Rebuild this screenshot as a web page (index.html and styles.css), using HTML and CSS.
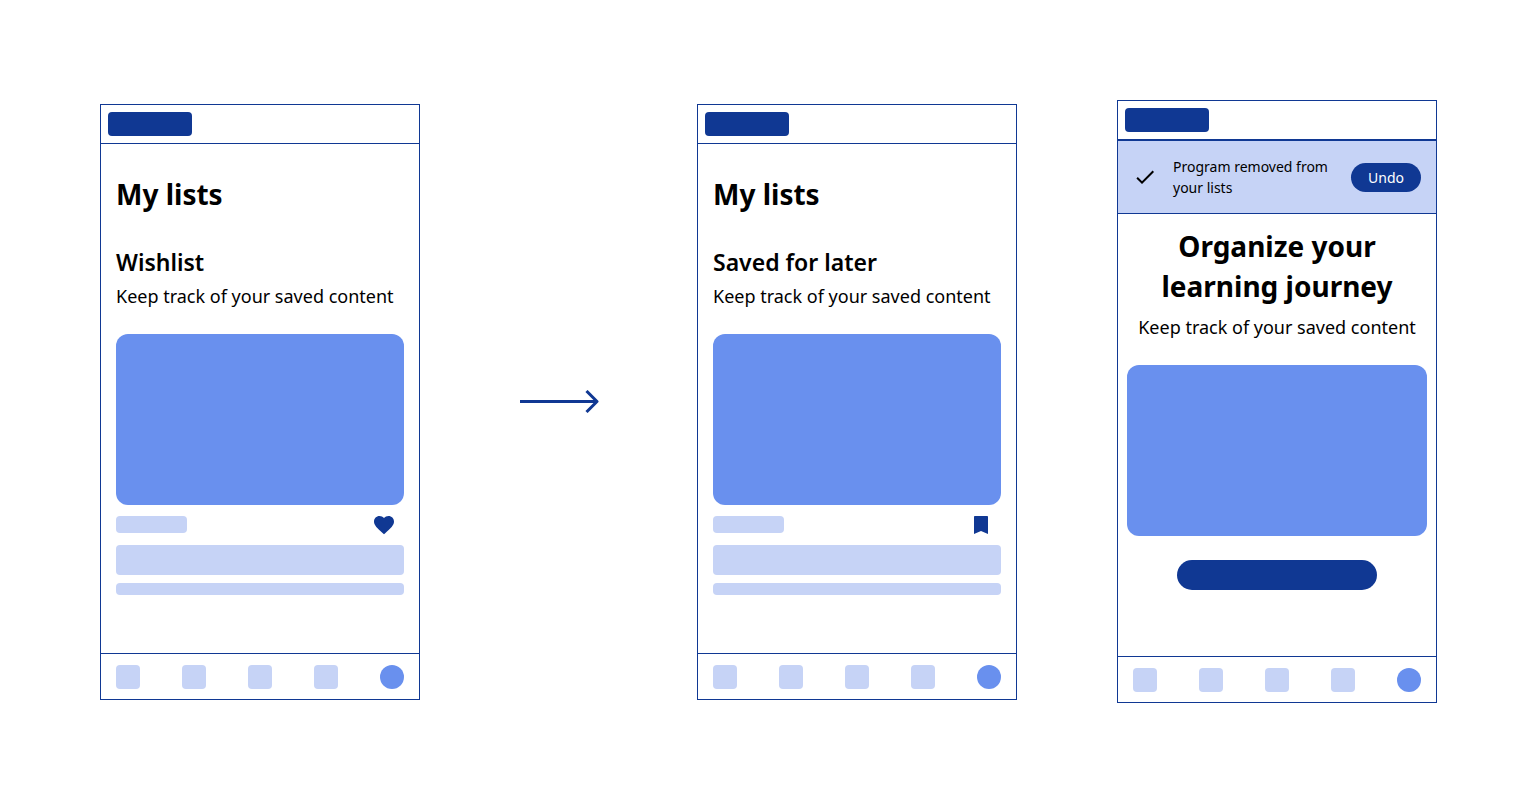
FILE: index.html
```
<!DOCTYPE html>
<html lang="en">
<head>
    <meta charset="UTF-8">
    <meta name="viewport" content="width=device-width, initial-scale=1.0">
    <title>My lists</title>
    <link rel="stylesheet" href="styles.css">
</head>
<body>

    <main class="flow">
        <section class="phone">
            <header class="topbar">
                <div class="logo"></div>
            </header>
            <div class="content">
                <h1>My lists</h1>
                <h2>Wishlist</h2>
                <p>Keep track of your saved content</p>
                <div class="cover"></div>
                <div class="meta">
                    <div class="tag"></div>
                    <svg class="icon" viewBox="0 0 24 24" aria-hidden="true">
                        <path d="M12 21.35l-1.45-1.32C5.4 15.36 2 12.28 2 8.5 2 5.42 4.42 3 7.5 3c1.74 0 3.41.81 4.5 2.09C13.09 3.81 14.76 3 16.5 3 19.58 3 22 5.42 22 8.5c0 3.78-3.4 6.86-8.55 11.54L12 21.35z"/>
                    </svg>
                </div>
                <div class="line line-big"></div>
                <div class="line"></div>
            </div>
            <nav class="tabs">
                <span class="tab"></span>
                <span class="tab"></span>
                <span class="tab"></span>
                <span class="tab"></span>
                <span class="tab active"></span>
            </nav>
        </section>

        <svg class="arrow" viewBox="0 0 80 23" aria-hidden="true">
            <path d="M0 11.5H77M66.5 1l10.5 10.5L66.5 22"/>
        </svg>

        <section class="phone">
            <header class="topbar">
                <div class="logo"></div>
            </header>
            <div class="content">
                <h1>My lists</h1>
                <h2>Saved for later</h2>
                <p>Keep track of your saved content</p>
                <div class="cover"></div>
                <div class="meta">
                    <div class="tag"></div>
                    <svg class="icon" viewBox="0 0 24 24" aria-hidden="true">
                        <path d="M18.2 3H5.8c-.5 0-.8.3-.8.8V21l7-3 7 3V3.800c0-.5-.3-.8-.8-.8z"/>
                    </svg>
                </div>
                <div class="line line-big"></div>
                <div class="line"></div>
            </div>
            <nav class="tabs">
                <span class="tab"></span>
                <span class="tab"></span>
                <span class="tab"></span>
                <span class="tab"></span>
                <span class="tab active"></span>
            </nav>
        </section>

        <section class="phone">
            <header class="topbar">
                <div class="logo"></div>
            </header>
            <div class="banner" role="status">
                <svg class="check" viewBox="0 0 24 24" aria-hidden="true">
                    <path d="M9 16.17L4.83 12l-1.42 1.41L9 19 21 7l-1.41-1.41z"/>
                </svg>
                <p>Program removed from your lists</p>
                <button class="undo" type="button">Undo</button>
            </div>
            <div class="content empty">
                <h1>Organize your learning journey</h1>
                <p>Keep track of your saved content</p>
                <div class="cover"></div>
                <button class="cta" type="button" aria-label="Explore"></button>
            </div>
            <nav class="tabs">
                <span class="tab"></span>
                <span class="tab"></span>
                <span class="tab"></span>
                <span class="tab"></span>
                <span class="tab active"></span>
            </nav>
        </section>
    </main>

</body>
</html>
```
FILE: styles.css
```
* {
    box-sizing: border-box;
}
body {
    margin: 0;
    font-family: "Noto Sans", sans-serif;
    background-color: #fff;
    color: #000;
}
h1, h2, p {
    margin: 0;
}
.flow {
    display: flex;
    justify-content: center;
    align-items: center;
    gap: 100px;
    min-height: 100vh;
}
.phone {
    flex: 0 0 320px;
    border: 1px solid #103893;
}
.topbar {
    padding: 7px;
    border-bottom: 1px solid #103893;
}
.logo {
    width: 84px;
    height: 24px;
    border-radius: 4px;
    background-color: #103893;
}
.content {
    padding: 30px 15px 58px;
}
h1 {
    font-size: 28px;
    line-height: 40px;
    font-weight: 700;
}
h2 {
    margin-top: 32px;
    font-size: 23px;
    line-height: 32px;
    font-weight: 600;
}
.content p {
    margin-top: 2px;
    font-size: 18px;
    line-height: 32px;
    white-space: nowrap;
}
.cover {
    height: 171px;
    margin-top: 22px;
    border-radius: 12px;
    background-color: #6990ee;
}
.meta {
    display: flex;
    justify-content: space-between;
    align-items: center;
    margin: 8px 0;
    padding-right: 8px;
}
.tag {
    width: 71px;
    height: 17px;
    border-radius: 4px;
    background-color: #c6d3f6;
}
.icon {
    width: 24px;
    height: 24px;
    fill: #103893;
}
.line {
    height: 12px;
    border-radius: 4px;
    background-color: #c6d3f6;
}
.line-big {
    height: 30px;
    margin-bottom: 8px;
}
.tabs {
    display: flex;
    justify-content: space-between;
    padding: 11px 15px 10px;
    border-top: 1px solid #103893;
}
.tab {
    width: 24px;
    height: 24px;
    border-radius: 4px;
    background-color: #c6d3f6;
}
.tab.active {
    border-radius: 50%;
    background-color: #6990ee;
}
.arrow {
    flex: none;
    width: 80px;
    height: 23px;
    margin-right: -3px;
    fill: none;
    stroke: #103893;
    stroke-width: 3;
    stroke-linejoin: round;
}
.banner {
    display: flex;
    align-items: center;
    gap: 16px;
    padding: 15px;
    border-top: 1px solid #103893;
    border-bottom: 1px solid #103893;
    background-color: #c6d3f6;
}
.banner p {
    flex: 1;
    font-size: 14px;
    line-height: 21px;
}
.check {
    flex: none;
    width: 24px;
    height: 24px;
}
.undo {
    width: 70px;
    height: 29px;
    padding: 0;
    border: none;
    border-radius: 15px;
    background-color: #103893;
    color: #fff;
    font-family: inherit;
    font-size: 14px;
    cursor: pointer;
}
.empty {
    padding: 12px 9px 66px;
    text-align: center;
}
.empty p {
    margin-top: 5px;
}
.cta {
    display: block;
    width: 200px;
    height: 30px;
    margin: 24px auto 0;
    border: none;
    border-radius: 15px;
    background-color: #103893;
    cursor: pointer;
}
```
